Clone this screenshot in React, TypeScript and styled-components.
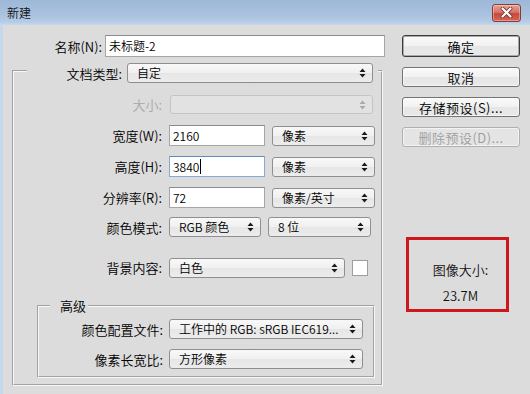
import React from "react";
import styled, { createGlobalStyle } from "styled-components";

const FONT = `"Noto Sans CJK SC", "Liberation Sans", sans-serif`;

const GlobalStyle = createGlobalStyle`
  * { box-sizing: border-box; }
  html, body { margin: 0; padding: 0; }
  body { background: #dddcdd; font-family: ${FONT}; font-weight: 350; color: #000; }
`;

const Window = styled.div`
  width: 530px;
  height: 394px;
  overflow: hidden;
  display: flex;
  flex-direction: column;
  background: #dddcdd;
`;

const TitleBar = styled.div`
  height: 25px;
  flex: none;
  display: flex;
  align-items: center;
  justify-content: space-between;
  padding: 0 8px 0 7px;
  background: linear-gradient(to bottom, #9db8d7 0%, #a8c1de 55%, #b6cce6 88%, #c6d9ee 100%);
`;

const TitleText = styled.span`
  font-size: 12px;
  line-height: 16px;
  color: #111;
`;

const CloseButton = styled.div`
  width: 29px;
  height: 18px;
  margin-right: 1px;
  border-radius: 3px;
  border: 1px solid #8a3a33;
  background: linear-gradient(to bottom, #e6a096 0%, #d67568 45%, #c6493a 55%, #d0665a 100%);
  box-shadow: inset 0 0 0 1px rgba(255, 255, 255, 0.35);
  display: flex;
  align-items: center;
  justify-content: center;
`;

const Body = styled.div`
  flex: 1;
  display: flex;
  gap: 17px;
  padding: 10px 0 0 9px;
  border-left: 3px solid #c5d8ec;
`;

const LeftCol = styled.div`
  width: 373px;
  flex: none;
  display: flex;
  flex-direction: column;
`;

const RightCol = styled.div`
  width: 118px;
  flex: none;
  display: flex;
  flex-direction: column;
`;

const Row = styled.div<{ $h: number; $gap: number; $mt?: number }>`
  height: ${(p) => p.$h}px;
  margin-top: ${(p) => p.$mt ?? 0}px;
  display: flex;
  align-items: center;
  gap: ${(p) => p.$gap}px;
  flex: none;
`;

const Label = styled.span<{ $w: number; $disabled?: boolean }>`
  width: ${(p) => p.$w}px;
  flex: none;
  text-align: right;
  font-size: 13px;
  line-height: 17px;
  white-space: nowrap;
  color: ${(p) => (p.$disabled ? "#a6a6a6" : "#000")};
`;

const TextField = styled.div<{ $w: number; $h: number; $focused?: boolean }>`
  width: ${(p) => p.$w}px;
  height: ${(p) => p.$h}px;
  flex: none;
  display: flex;
  align-items: center;
  padding-left: 3px;
  background: #fff;
  border: 1px solid ${(p) => (p.$focused ? "#86aad4" : "#a6a6a6")};
  border-top-color: ${(p) => (p.$focused ? "#5f8cc0" : "#8b8b8b")};
  font-size: 12px;
  line-height: 16px;
  white-space: nowrap;
`;

const Caret = styled.span`
  display: inline-block;
  width: 1px;
  height: 15px;
  background: #000;
  margin-left: 1px;
`;

const SelectBox = styled.div<{ $w: number; $h: number; $disabled?: boolean }>`
  width: ${(p) => p.$w}px;
  height: ${(p) => p.$h}px;
  flex: none;
  display: flex;
  align-items: center;
  gap: 4px;
  padding: 0 6px 0 9px;
  border: 1px solid ${(p) => (p.$disabled ? "#c4c4c4" : "#8f8f8f")};
  border-radius: 3px;
  background: ${(p) =>
    p.$disabled
      ? "#e2e2e2"
      : "linear-gradient(to bottom, #f8f8f8 0%, #f0f0f0 50%, #e6e6e6 51%, #ececec 100%)"};
  font-size: 12px;
  line-height: 16px;
  color: #000;
`;

const SelectValue = styled.span`
  flex: 1;
  min-width: 0;
  overflow: hidden;
  white-space: nowrap;
`;

const Swatch = styled.div`
  width: 16px;
  height: 16px;
  flex: none;
  background: #fff;
  border: 1px solid #9d9d9d;
`;

const Group = styled.fieldset<{
  $w: number;
  $mt: number;
  $mb: number;
  $ml: number;
  $pt: number;
  $pb: number;
}>`
  width: ${(p) => p.$w}px;
  margin: ${(p) => `${p.$mt}px 0 ${p.$mb}px ${p.$ml}px`};
  padding: ${(p) => `${p.$pt}px 0 ${p.$pb}px 0`};
  border: 2px groove #f7f7f7;
  min-width: 0;
  flex: none;
`;

const Legend = styled.legend<{ $ml: number; $pad: string }>`
  margin-left: ${(p) => p.$ml}px;
  padding: ${(p) => p.$pad};
  font-size: 13px;
  line-height: 17px;
`;

const ButtonStack = styled.div`
  display: flex;
  flex-direction: column;
  gap: 10px;
`;

const Button = styled.div<{ $primary?: boolean; $disabled?: boolean }>`
  height: ${(p) => (p.$primary ? 22 : 20)}px;
  display: flex;
  align-items: center;
  justify-content: center;
  border: 1px solid ${(p) => (p.$primary ? "#3c3c3c" : p.$disabled ? "#b0b0b0" : "#737373")};
  border-radius: 3px;
  background: ${(p) =>
    p.$disabled
      ? "#e4e4e4"
      : "linear-gradient(to bottom, #fafafa 0%, #f1f1f1 50%, #e6e6e6 51%, #e9e9e9 100%)"};
  box-shadow: ${(p) =>
    p.$primary ? "inset 0 0 0 1px #a9a9a9" : "inset 0 0 0 1px rgba(255,255,255,0.55)"};
  font-size: 13px;
  line-height: 17px;
  letter-spacing: 0.5px;
  color: ${(p) => (p.$disabled ? "#9d9d9d" : "#000")};
`;

const InfoBox = styled.div`
  margin: 90px 0 0 4px;
  width: 103px;
  height: 75px;
  border: 3px solid #d0161d;
  display: flex;
  flex-direction: column;
  align-items: center;
  gap: 9px;
  padding: 21px 0 0 6px;
  font-size: 13px;
  line-height: 17px;
  color: #111;
`;

const Arrows = ({ disabled }: { disabled?: boolean }) => (
  <svg width="7" height="10" viewBox="0 0 7 10" style={{ flex: "none" }}>
    <path d="M3.5 0.5 L6.5 4 H0.5 Z M0.5 6 H6.5 L3.5 9.5 Z" fill={disabled ? "#a9a9a9" : "#1a1a1a"} />
  </svg>
);

const Select = ({
  w,
  h = 20,
  value,
  disabled,
}: {
  w: number;
  h?: number;
  value?: string;
  disabled?: boolean;
}) => (
  <SelectBox $w={w} $h={h} $disabled={disabled}>
    <SelectValue>{value}</SelectValue>
    <Arrows disabled={disabled} />
  </SelectBox>
);

export default function App() {
  return (
    <>
      <GlobalStyle />
      <Window>
        <TitleBar>
          <TitleText>新建</TitleText>
          <CloseButton>
            <svg width="13" height="11" viewBox="0 0 13 11">
              <path d="M2.5 1.5 L10.5 9.5 M10.5 1.5 L2.5 9.5" stroke="#7a2b23" strokeWidth="3.8" strokeLinecap="round" />
              <path d="M2.5 1.5 L10.5 9.5 M10.5 1.5 L2.5 9.5" stroke="#ffffff" strokeWidth="2.2" strokeLinecap="round" />
            </svg>
          </CloseButton>
        </TitleBar>
        <Body>
          <LeftCol>
            <Row $h={22} $gap={3}>
              <Label $w={90}>名称(N):</Label>
              <TextField $w={280} $h={22}>未标题-2</TextField>
            </Row>
            <Group $w={371} $mt={2} $mb={0} $ml={0} $pt={6} $pb={0}>
              <Legend $ml={13} $pad="4px 5px 0 5px">
                <Row $h={20} $gap={5}>
                  <Label $w={90}>文档类型:</Label>
                  <Select w={246} value="自定" />
                </Row>
              </Legend>
              <Row $h={31} $gap={8}>
                <Label $w={148} $disabled>大小:</Label>
                <Select w={203} h={19} disabled />
              </Row>
              <Row $h={31} $gap={7}>
                <Label $w={148}>宽度(W):</Label>
                <TextField $w={96} $h={21}>2160</TextField>
                <Select w={103} value="像素" />
              </Row>
              <Row $h={31} $gap={7}>
                <Label $w={148}>高度(H):</Label>
                <TextField $w={96} $h={21} $focused>
                  3840
                  <Caret />
                </TextField>
                <Select w={103} value="像素" />
              </Row>
              <Row $h={31} $gap={7}>
                <Label $w={148}>分辨率(R):</Label>
                <TextField $w={96} $h={21}>72</TextField>
                <Select w={103} value="像素/英寸" />
              </Row>
              <Row $h={28} $gap={7}>
                <Label $w={148}>颜色模式:</Label>
                <Select w={92} value="RGB 颜色" />
                <Select w={103} value="8 位" />
              </Row>
              <Row $h={31} $gap={7} $mt={11}>
                <Label $w={148}>背景内容:</Label>
                <Select w={176} value="白色" />
                <Swatch />
              </Row>
              <Group $w={338} $mt={14} $mb={6} $ml={23} $pt={0} $pb={2}>
                <Legend $ml={11} $pad="0 2px 0 10px">高级</Legend>
                <Row $h={30} $gap={6}>
                  <Label $w={124}>颜色配置文件:</Label>
                  <Select w={194} value="工作中的 RGB: sRGB IEC619..." />
                </Row>
                <Row $h={30} $gap={6}>
                  <Label $w={124}>像素长宽比:</Label>
                  <Select w={194} value="方形像素" />
                </Row>
              </Group>
            </Group>
          </LeftCol>
          <RightCol>
            <ButtonStack>
              <Button $primary>确定</Button>
              <Button>取消</Button>
              <Button>存储预设(S)...</Button>
              <Button $disabled>删除预设(D)...</Button>
            </ButtonStack>
            <InfoBox>
              <span>图像大小:</span>
              <span>23.7M</span>
            </InfoBox>
          </RightCol>
        </Body>
      </Window>
    </>
  );
}
